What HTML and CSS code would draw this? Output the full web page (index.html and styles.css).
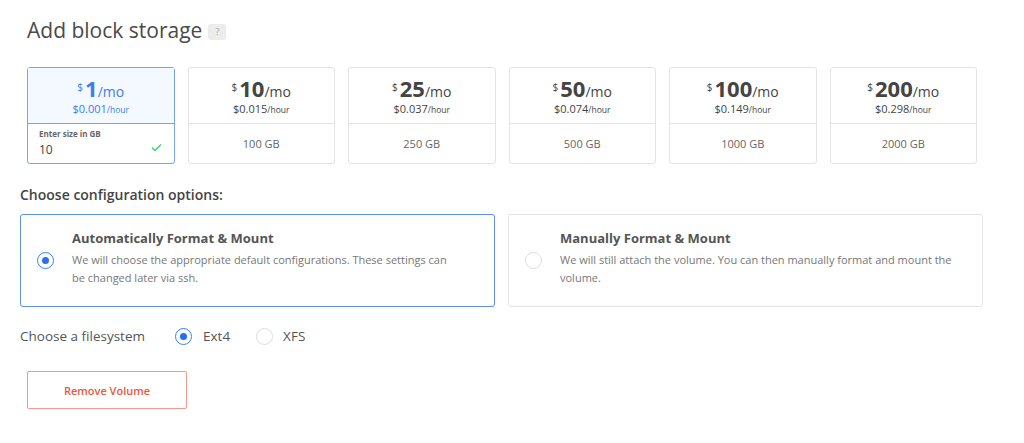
FILE: index.html
```html
<!DOCTYPE html>
<html lang="en">
<head>
  <meta charset="UTF-8">
  <title>Add block storage</title>
  <link rel="stylesheet" href="styles.css">
</head>
<body>
  <div class="panel">
    <h2 class="title">Add block storage <span class="help">?</span></h2>

    <div class="sizes">
      <div class="size selected">
        <div class="price">
          <div class="monthly"><sup>$</sup><b>1</b>/mo</div>
          <div class="hourly">$0.001<small>/hour</small></div>
        </div>
        <div class="custom">
          <label>Enter size in GB</label>
          <div class="custom-row">
            <span class="value">10</span>
            <svg class="check" width="11" height="9" viewBox="0 0 11 9"><path d="M1 4.5 L4 7.5 L10 1.5" fill="none" stroke="#3fcf7c" stroke-width="1.4"/></svg>
          </div>
        </div>
      </div>
      <div class="size">
        <div class="price">
          <div class="monthly"><sup>$</sup><b>10</b>/mo</div>
          <div class="hourly">$0.015<small>/hour</small></div>
        </div>
        <div class="gb">100 GB</div>
      </div>
      <div class="size">
        <div class="price">
          <div class="monthly"><sup>$</sup><b>25</b>/mo</div>
          <div class="hourly">$0.037<small>/hour</small></div>
        </div>
        <div class="gb">250 GB</div>
      </div>
      <div class="size">
        <div class="price">
          <div class="monthly"><sup>$</sup><b>50</b>/mo</div>
          <div class="hourly">$0.074<small>/hour</small></div>
        </div>
        <div class="gb">500 GB</div>
      </div>
      <div class="size">
        <div class="price">
          <div class="monthly"><sup>$</sup><b>100</b>/mo</div>
          <div class="hourly">$0.149<small>/hour</small></div>
        </div>
        <div class="gb">1000 GB</div>
      </div>
      <div class="size">
        <div class="price">
          <div class="monthly"><sup>$</sup><b>200</b>/mo</div>
          <div class="hourly">$0.298<small>/hour</small></div>
        </div>
        <div class="gb">2000 GB</div>
      </div>
    </div>

    <h3 class="subtitle">Choose configuration options:</h3>

    <div class="options">
      <div class="option active">
        <span class="radio on"></span>
        <div class="option-text">
          <div class="option-title">Automatically Format &amp; Mount</div>
          <p>We will choose the appropriate default configurations. These settings can<br>be changed later via ssh.</p>
        </div>
      </div>
      <div class="option">
        <span class="radio"></span>
        <div class="option-text">
          <div class="option-title">Manually Format &amp; Mount</div>
          <p>We will still attach the volume. You can then manually format and mount the volume.</p>
        </div>
      </div>
    </div>

    <div class="filesystem">
      <span class="fs-label">Choose a filesystem</span>
      <span class="radio on"></span><span class="fs-name">Ext4</span>
      <span class="radio"></span><span class="fs-name">XFS</span>
    </div>

    <button class="remove">Remove Volume</button>
  </div>
</body>
</html>
```

FILE: styles.css
```css
body {
  margin: 0;
  background: #fff;
  font-family: "Open Sans", Lato, sans-serif;
  color: #444;
}

.panel {
  padding: 15px 0 0 20px;
  width: 964px;
}

.title {
  margin: 0 0 0 7px;
  font-size: 21px;
  font-weight: 400;
  color: #4a4a4a;
  display: flex;
  align-items: center;
  gap: 6px;
  height: 30px;
}

.help {
  display: inline-block;
  width: 18px;
  height: 16px;
  background: #ececec;
  border-radius: 2px;
  font-size: 9px;
  color: #aaa;
  text-align: center;
  line-height: 16px;
  margin-top: 3px;
}

.sizes {
  display: grid;
  grid-template-columns: repeat(6, 1fr);
  gap: 13px;
  margin: 22px 0 0 7px;
  width: 950px;
}

.size {
  border: 1px solid #e3e3e3;
  border-radius: 3px;
  height: 95px;
  display: flex;
  flex-direction: column;
}

.size.selected {
  border-color: #76a2f4;
}

.price {
  height: 55px;
  border-bottom: 1px solid #e3e3e3;
  display: flex;
  flex-direction: column;
  align-items: center;
  justify-content: center;
  color: #444;
}

.selected .price {
  background: #f4f8ff;
  border-bottom-color: #76a2f4;
  color: #3b7ff0;
}

.monthly {
  font-size: 14px;
  line-height: 20px;
  margin-top: 2px;
}

.monthly sup {
  font-size: 10px;
  vertical-align: 6px;
  margin-right: 2px;
}

.monthly b {
  font-size: 22px;
  font-weight: 700;
}

.hourly {
  font-size: 11px;
  line-height: 14px;
}

.hourly small {
  font-size: 8.5px;
}

.gb {
  flex: 1;
  display: flex;
  align-items: center;
  justify-content: center;
  font-size: 11px;
  color: #666;
}

.custom {
  padding: 4px 11px 0 11px;
}

.custom label {
  display: block;
  font-size: 8px;
  font-weight: 700;
  color: #666;
  line-height: 12px;
}

.custom-row {
  display: flex;
  justify-content: space-between;
  align-items: center;
  margin-top: 1px;
}

.value {
  font-size: 12px;
  color: #444;
  line-height: 18px;
}

.check {
  margin-right: 1px;
  margin-top: -6px;
}

.subtitle {
  margin: 22px 0 0 0;
  font-size: 14px;
  font-weight: 600;
  color: #444;
  line-height: 18px;
}

.options {
  display: grid;
  grid-template-columns: 475px 475px;
  gap: 13px;
  margin-top: 10px;
}

.option {
  border: 1px solid #e3e3e3;
  border-radius: 3px;
  height: 91px;
  display: flex;
  align-items: center;
  padding-left: 16px;
}

.option.active {
  border-color: #5b8ff0;
}

.radio {
  display: inline-block;
  box-sizing: border-box;
  width: 17px;
  height: 17px;
  border: 1px solid #ddd;
  border-radius: 50%;
  flex-shrink: 0;
  position: relative;
}

.radio.on {
  border-color: #3b7ff0;
}

.radio.on::after {
  content: "";
  position: absolute;
  left: 4px;
  top: 4px;
  width: 7px;
  height: 7px;
  border-radius: 50%;
  background: #2a6ef0;
}

.option-text {
  margin-left: 18px;
  padding-right: 24px;
}

.option-title {
  font-size: 13px;
  font-weight: 700;
  color: #555;
  line-height: 18px;
  margin-top: -6px;
}

.option-text p {
  margin: 4px 0 0;
  font-size: 11px;
  line-height: 18px;
  color: #777;
}

.filesystem {
  display: flex;
  align-items: center;
  margin-top: 20px;
  height: 18px;
}

.fs-label {
  font-size: 13.5px;
  color: #555;
  width: 155px;
}

.fs-name {
  font-size: 13.5px;
  color: #555;
  margin: 0 26px 0 11px;
}

.fs-name:last-child {
  margin-left: 10px;
}

.remove {
  margin: 26px 0 0 7px;
  width: 160px;
  height: 38px;
  background: #fff;
  border: 1px solid #f5978a;
  border-radius: 2px;
  color: #f0563a;
  font-family: inherit;
  font-size: 11px;
  font-weight: 600;
}
```
